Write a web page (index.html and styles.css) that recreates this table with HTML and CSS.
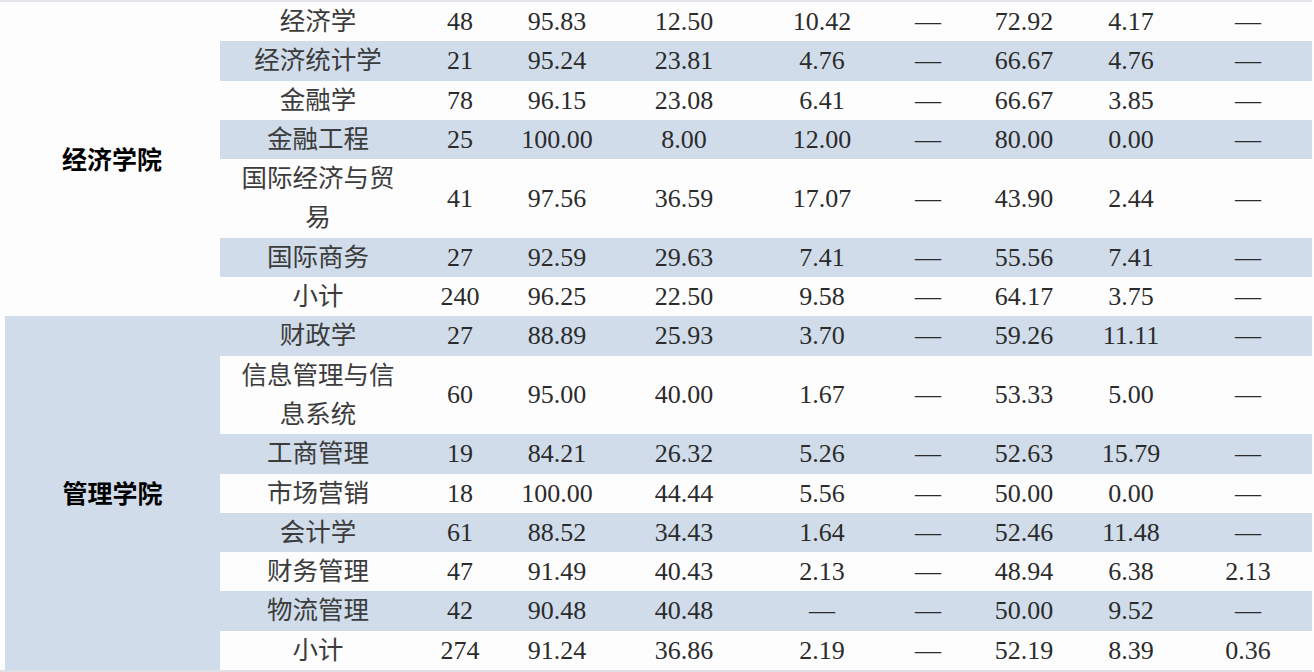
FILE: index.html
```html
<!DOCTYPE html>
<html lang="zh-CN">
<head>
<meta charset="utf-8">
<title>专业统计表</title>
<link rel="stylesheet" href="styles.css">
</head>
<body>
<div class="table">
  <div class="group">
    <div class="label">经济学院</div>
    <div class="rows">
      <div class="row"><span class="major">经济学</span><span>48</span><span>95.83</span><span>12.50</span><span>10.42</span><span>—</span><span>72.92</span><span>4.17</span><span>—</span></div>
      <div class="row alt"><span class="major">经济统计学</span><span>21</span><span>95.24</span><span>23.81</span><span>4.76</span><span>—</span><span>66.67</span><span>4.76</span><span>—</span></div>
      <div class="row"><span class="major">金融学</span><span>78</span><span>96.15</span><span>23.08</span><span>6.41</span><span>—</span><span>66.67</span><span>3.85</span><span>—</span></div>
      <div class="row alt"><span class="major">金融工程</span><span>25</span><span>100.00</span><span>8.00</span><span>12.00</span><span>—</span><span>80.00</span><span>0.00</span><span>—</span></div>
      <div class="row"><span class="major">国际经济与贸易</span><span>41</span><span>97.56</span><span>36.59</span><span>17.07</span><span>—</span><span>43.90</span><span>2.44</span><span>—</span></div>
      <div class="row alt"><span class="major">国际商务</span><span>27</span><span>92.59</span><span>29.63</span><span>7.41</span><span>—</span><span>55.56</span><span>7.41</span><span>—</span></div>
      <div class="row"><span class="major">小计</span><span>240</span><span>96.25</span><span>22.50</span><span>9.58</span><span>—</span><span>64.17</span><span>3.75</span><span>—</span></div>
    </div>
  </div>
  <div class="group">
    <div class="label shaded">管理学院</div>
    <div class="rows">
      <div class="row alt"><span class="major">财政学</span><span>27</span><span>88.89</span><span>25.93</span><span>3.70</span><span>—</span><span>59.26</span><span>11.11</span><span>—</span></div>
      <div class="row"><span class="major">信息管理与信息系统</span><span>60</span><span>95.00</span><span>40.00</span><span>1.67</span><span>—</span><span>53.33</span><span>5.00</span><span>—</span></div>
      <div class="row alt"><span class="major">工商管理</span><span>19</span><span>84.21</span><span>26.32</span><span>5.26</span><span>—</span><span>52.63</span><span>15.79</span><span>—</span></div>
      <div class="row"><span class="major">市场营销</span><span>18</span><span>100.00</span><span>44.44</span><span>5.56</span><span>—</span><span>50.00</span><span>0.00</span><span>—</span></div>
      <div class="row alt"><span class="major">会计学</span><span>61</span><span>88.52</span><span>34.43</span><span>1.64</span><span>—</span><span>52.46</span><span>11.48</span><span>—</span></div>
      <div class="row"><span class="major">财务管理</span><span>47</span><span>91.49</span><span>40.43</span><span>2.13</span><span>—</span><span>48.94</span><span>6.38</span><span>2.13</span></div>
      <div class="row alt"><span class="major">物流管理</span><span>42</span><span>90.48</span><span>40.48</span><span>—</span><span>—</span><span>50.00</span><span>9.52</span><span>—</span></div>
      <div class="row"><span class="major">小计</span><span>274</span><span>91.24</span><span>36.86</span><span>2.19</span><span>—</span><span>52.19</span><span>8.39</span><span>0.36</span></div>
    </div>
  </div>
</div>
</body>
</html>
```

FILE: styles.css
```css
html, body {
  margin: 0;
  padding: 0;
  background: #fdfdfe;
}
body {
  width: 1314px;
  height: 672px;
  overflow: hidden;
  font-family: "Liberation Serif", "Noto Sans CJK SC", serif;
  font-size: 26px;
  color: #2b2b2b;
}
.table {
  width: 1312px;
  border-top: 2px solid #e2e6ec;
  border-bottom: 2px solid #dde1e6;
}
.group {
  display: flex;
}
.label {
  width: 220px;
  flex: none;
  display: flex;
  align-items: center;
  justify-content: center;
  font-family: "Noto Sans CJK SC", sans-serif;
  font-weight: 700;
  color: #000;
  font-size: 25px;
  padding-left: 4px;
  padding-bottom: 3px;
  box-sizing: border-box;
}
.label.shaded {
  margin-left: 5px;
  width: 215px;
  padding-left: 0;
  background: #d0dcea;
}
.rows {
  flex: 1;
  display: flex;
  flex-direction: column;
}
.row {
  display: grid;
  grid-template-columns: 196px 88px 106px 148px 128px 84px 108px 106px 128px;
  align-items: center;
  line-height: 39.3px;
  text-align: center;
}
.row.alt {
  background: #d0dcea;
}
.row span {
  display: block;
}
.major {
  font-family: "Noto Sans CJK SC", sans-serif;
  color: #3c3c3c;
  padding: 0 18px;
  font-size: 25.5px;
  margin-top: -3px;
  margin-bottom: 3px;
}
```
